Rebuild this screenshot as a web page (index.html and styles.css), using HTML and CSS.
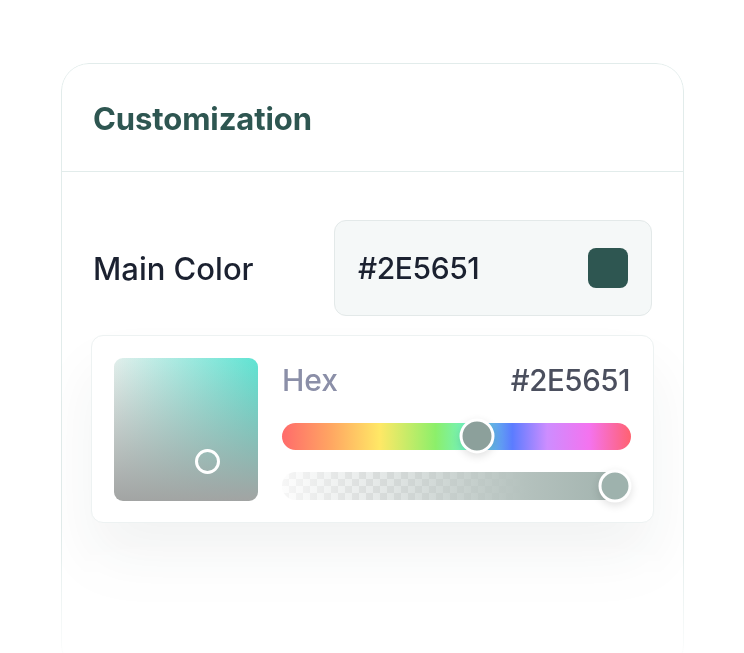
FILE: index.html
```html
<!DOCTYPE html>
<html lang="en">

<head>
  <meta charset="UTF-8" />
  <meta name="viewport" content="width=device-width, initial-scale=1.0">
  <title>Customization</title>
  <link rel="stylesheet" href="styles.css">
</head>

<body>
  <div class="card">
    <div class="card-header">
      <h2>Customization</h2>
    </div>

    <div class="card-body">
      <div class="field">
        <label class="field-label">Main Color</label>
        <div class="color-input">
          <span class="color-value">#2E5651</span>
          <span class="swatch"></span>
        </div>
      </div>

      <div class="picker">
        <div class="saturation">
          <span class="sat-marker"></span>
        </div>
        <div class="controls">
          <div class="hex-row">
            <span class="hex-label">Hex</span>
            <span class="hex-value">#2E5651</span>
          </div>
          <div class="slider hue">
            <span class="thumb" style="left: 56%"></span>
          </div>
          <div class="slider alpha">
            <span class="thumb" style="left: 100%"></span>
          </div>
        </div>
      </div>
    </div>
  </div>
</body>

</html>
```

FILE: styles.css
```css
body {
  margin: 0;
  background: #fff;
  font-family: Inter, 'Noto Sans', sans-serif;
  overflow: hidden;
}

.card {
  box-sizing: border-box;
  width: 623px;
  height: 610px;
  margin: 63px 0 0 61px;
  background: #fff;
  border: 1px solid #e2eceb;
  border-radius: 28px;
  box-shadow: 0 24px 60px rgba(20, 60, 50, 0.05);
  -webkit-mask-image: linear-gradient(to bottom, #000 78%, rgba(0, 0, 0, 0) 100%);
  mask-image: linear-gradient(to bottom, #000 78%, rgba(0, 0, 0, 0) 100%);
}

.card-header {
  height: 107px;
  padding-left: 31px;
  display: flex;
  align-items: center;
  border-bottom: 1px solid #e2eceb;
}

.card-header h2 {
  margin: 0;
  padding-top: 2px;
  font-size: 31px;
  font-weight: 700;
  color: #2e5651;
  letter-spacing: -0.1px;
}

.card-body {
  padding: 48px 29px 0 29px;
}

.field {
  display: flex;
  align-items: center;
  justify-content: space-between;
  padding-right: 2px;
}

.field-label {
  padding-left: 2px;
  font-size: 31px;
  font-weight: 500;
  color: #1b2130;
}

.color-input {
  box-sizing: border-box;
  width: 318px;
  height: 96px;
  padding: 0 23px 0 23px;
  display: flex;
  align-items: center;
  justify-content: space-between;
  background: #f5f8f8;
  border: 1px solid #e3e9e9;
  border-radius: 12px;
}

.color-value {
  font-size: 30px;
  font-weight: 500;
  color: #1b2130;
  letter-spacing: -0.4px;
}

.swatch {
  width: 40px;
  height: 40px;
  border-radius: 8px;
  background: #2e5651;
}

.picker {
  box-sizing: border-box;
  margin-top: 19px;
  height: 188px;
  padding: 22px;
  display: flex;
  gap: 24px;
  background: #fff;
  border: 1px solid #edf2f2;
  border-radius: 12px;
  box-shadow: 0 36px 60px rgba(30, 50, 45, 0.06);
}

.saturation {
  position: relative;
  width: 144px;
  height: 143px;
  flex-shrink: 0;
  border-radius: 9px;
  background:
    linear-gradient(to bottom, rgba(160, 160, 160, 0) 0%, #a2a4a3 100%),
    linear-gradient(to right, #e2efec 0%, #5ee4d3 100%);
}

.sat-marker {
  position: absolute;
  left: 81px;
  top: 91px;
  width: 19px;
  height: 19px;
  border: 3px solid #fff;
  border-radius: 50%;
}

.controls {
  flex: 1;
  display: flex;
  flex-direction: column;
}

.hex-row {
  display: flex;
  justify-content: space-between;
  align-items: center;
  height: 46px;
  margin-top: -1px;
}

.hex-label {
  font-size: 30px;
  font-weight: 500;
  color: #8b8fa8;
}

.hex-value {
  padding-right: 1px;
  font-size: 29.5px;
  font-weight: 500;
  color: #4b4f5e;
  letter-spacing: -0.4px;
}

.slider {
  position: relative;
  height: 28px;
  border-radius: 14px;
}

.hue {
  margin-top: 20px;
  background: linear-gradient(to right,
      #ff6b6b 0%,
      #ffa662 14%,
      #ffe866 28%,
      #8cef6a 44%,
      #6ef3cf 54%,
      #5b7cff 66%,
      #cd8dff 76%,
      #f473ef 88%,
      #ff6270 100%);
}

.alpha {
  margin-top: 22px;
  background:
    linear-gradient(to right, rgba(255, 255, 255, 0.6) 0%, rgba(160, 176, 172, 0.2) 25%, #b4c1bd 70%, #9fb1ac 100%),
    repeating-conic-gradient(#e9e9e9 0% 25%, #fafafa 0% 50%) 0 0 / 14px 14px;
}

.thumb {
  position: absolute;
  top: 50%;
  box-sizing: border-box;
  width: 35px;
  height: 35px;
  transform: translate(-50%, -50%);
  border: 3px solid #fff;
  border-radius: 50%;
  background: #8ca09b;
  box-shadow: 0 3px 8px rgba(0, 0, 0, 0.12);
}

.alpha .thumb {
  width: 33px;
  height: 33px;
  margin-left: -16px;
  background: #9eb2ad;
}
```
